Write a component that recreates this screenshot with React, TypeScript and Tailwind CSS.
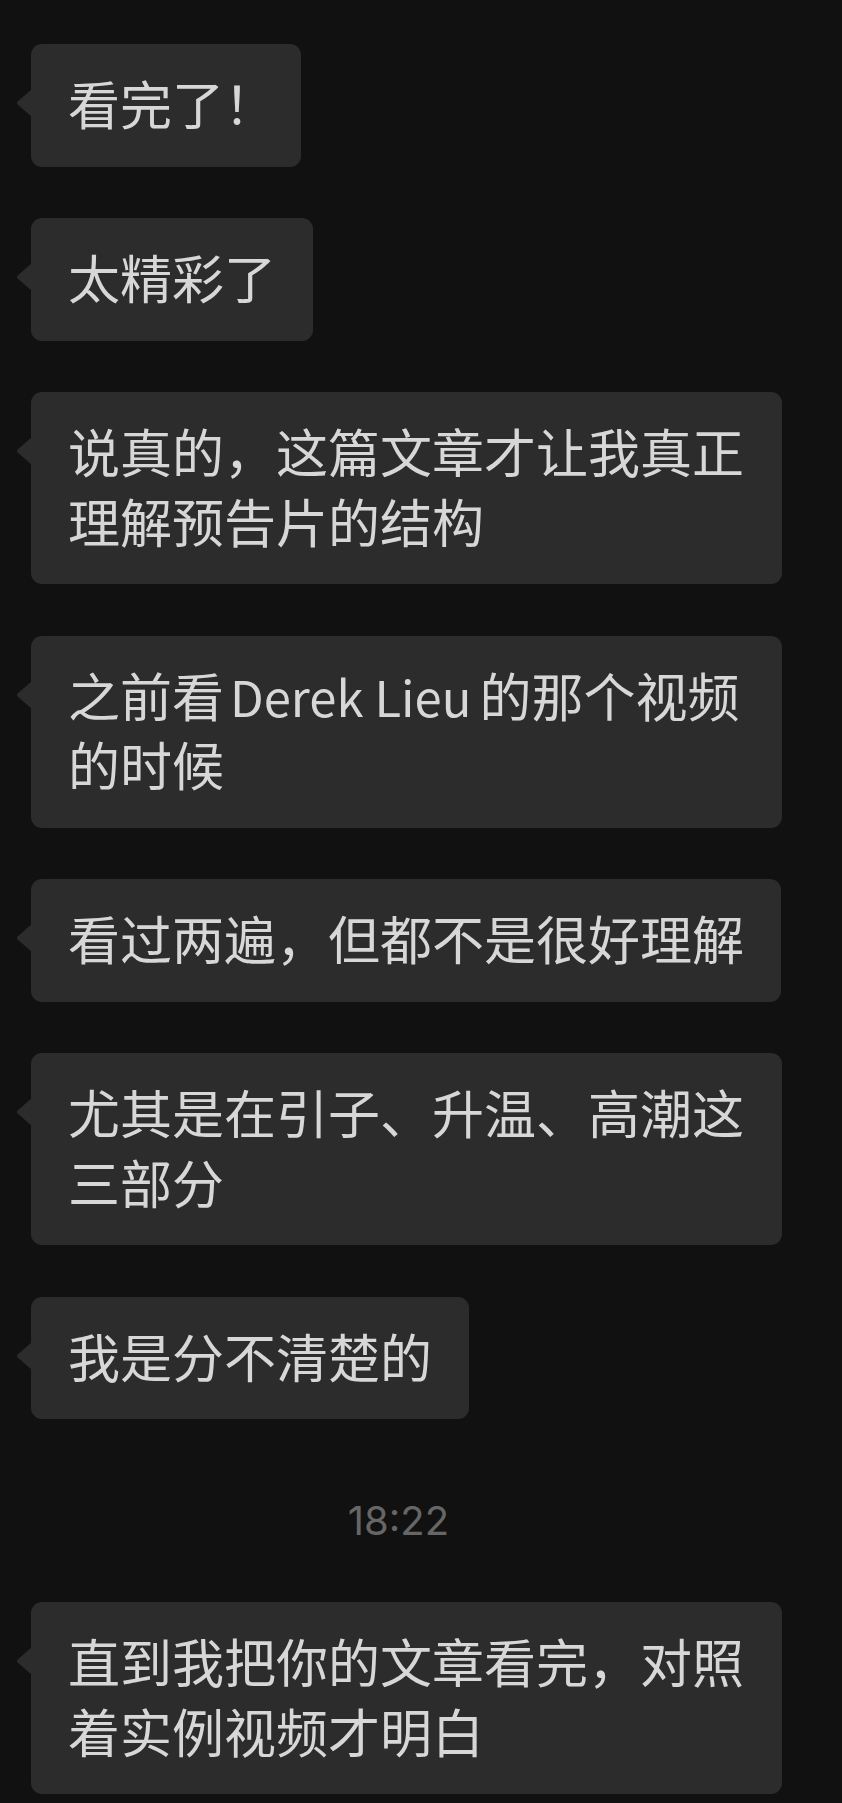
import type { ReactNode } from "react";

const Tail = () => (
  <svg
    className="absolute left-[-15px] top-[45px]"
    width="16"
    height="28"
    viewBox="0 0 16 28"
  >
    <path d="M16 0 L1.6 12.4 Q0 14 1.6 15.6 L16 28 Z" fill="#2c2c2c" />
  </svg>
);

const Bubble = ({ children, tight }: { children: ReactNode; tight?: boolean }) => (
  <div className="flex">
    <div
      className={
        tight
          ? "relative max-w-[751px] rounded-[11px] bg-[#2c2c2c] pl-[37px] pr-[25px] pt-[24px] pb-[29px] text-[52px] leading-[69.5px] text-[#d7d7d7]"
          : "relative max-w-[751px] rounded-[11px] bg-[#2c2c2c] px-[37px] pt-[24px] pb-[29px] text-[52px] leading-[69.5px] text-[#d7d7d7]"
      }
    >
      <Tail />
      {children}
    </div>
  </div>
);

export default function App() {
  return (
    <div
      className="min-h-[1803px] w-full bg-[#111111] pl-[31px] pt-[44px]"
      style={{ fontFamily: '"Noto Sans CJK SC", "Noto Sans", sans-serif' }}
    >
      <div className="flex flex-col gap-[51.5px]">
        <Bubble tight>看完了！</Bubble>
        <Bubble>太精彩了</Bubble>
        <Bubble>说真的，这篇文章才让我真正理解预告片的结构</Bubble>
        <Bubble>
          之前看<span className="ml-[6px] mr-[8px] text-[49px] leading-[40px]">Derek Lieu</span>的那个视频的时候
        </Bubble>
        <Bubble>看过两遍，但都不是很好理解</Bubble>
        <Bubble>尤其是在引子、升温、高潮这三部分</Bubble>
        <Bubble>我是分不清楚的</Bubble>
        <div className="mt-[20px] flex h-[60px] justify-center pr-[76px] font-['Inter',sans-serif] text-[40px] leading-[60px] text-[#666666]">
          18:22
        </div>
        <Bubble>直到我把你的文章看完，对照着实例视频才明白</Bubble>
      </div>
    </div>
  );
}
